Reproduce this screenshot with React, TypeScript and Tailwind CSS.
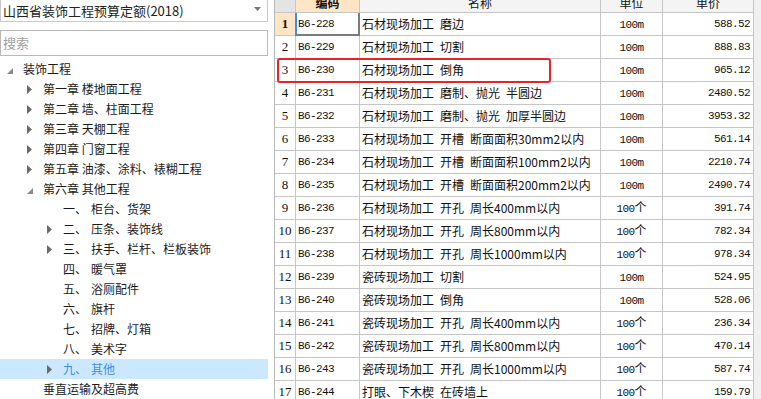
import React from "react";

type TreeNode = {
  level: number;
  arrow?: "open" | "closed";
  no?: string;
  label: string;
  selected?: boolean;
};

const tree: TreeNode[] = [
  { level: 0, arrow: "open", label: "装饰工程" },
  { level: 1, arrow: "closed", label: "第一章 楼地面工程" },
  { level: 1, arrow: "closed", label: "第二章 墙、柱面工程" },
  { level: 1, arrow: "closed", label: "第三章 天棚工程" },
  { level: 1, arrow: "closed", label: "第四章 门窗工程" },
  { level: 1, arrow: "closed", label: "第五章 油漆、涂料、裱糊工程" },
  { level: 1, arrow: "open", label: "第六章 其他工程" },
  { level: 2, no: "一、", label: "柜台、货架" },
  { level: 2, arrow: "closed", no: "二、", label: "压条、装饰线" },
  { level: 2, arrow: "closed", no: "三、", label: "扶手、栏杆、栏板装饰" },
  { level: 2, no: "四、", label: "暖气罩" },
  { level: 2, no: "五、", label: "浴厕配件" },
  { level: 2, no: "六、", label: "旗杆" },
  { level: 2, no: "七、", label: "招牌、灯箱" },
  { level: 2, no: "八、", label: "美术字" },
  { level: 2, arrow: "closed", no: "九、", label: "其他", selected: true },
  { level: 1, label: "垂直运输及超高费" },
];

const rows = [
  ["B6-228", "石材现场加工 磨边", "100m", "588.52"],
  ["B6-229", "石材现场加工 切割", "100m", "888.83"],
  ["B6-230", "石材现场加工 倒角", "100m", "965.12"],
  ["B6-231", "石材现场加工 磨制、抛光 半圆边", "100m", "2480.52"],
  ["B6-232", "石材现场加工 磨制、抛光 加厚半圆边", "100m", "3953.32"],
  ["B6-233", "石材现场加工 开槽 断面面积30mm2以内", "100m", "561.14"],
  ["B6-234", "石材现场加工 开槽 断面面积100mm2以内", "100m", "2210.74"],
  ["B6-235", "石材现场加工 开槽 断面面积200mm2以内", "100m", "2490.74"],
  ["B6-236", "石材现场加工 开孔 周长400mm以内", "100个", "391.74"],
  ["B6-237", "石材现场加工 开孔 周长800mm以内", "100个", "782.34"],
  ["B6-238", "石材现场加工 开孔 周长1000mm以内", "100个", "978.34"],
  ["B6-239", "瓷砖现场加工 切割", "100m", "524.95"],
  ["B6-240", "瓷砖现场加工 倒角", "100m", "528.06"],
  ["B6-241", "瓷砖现场加工 开孔 周长400mm以内", "100个", "236.34"],
  ["B6-242", "瓷砖现场加工 开孔 周长800mm以内", "100个", "470.14"],
  ["B6-243", "瓷砖现场加工 开孔 周长1000mm以内", "100个", "587.74"],
  ["B6-244", "打眼、下木楔 在砖墙上", "100个", "159.79"],
];

function Arrow({ kind }: { kind?: "open" | "closed" }) {
  if (kind === "open")
    return (
      <svg width="6" height="6" viewBox="0 0 6 6" className="mt-[3px]">
        <polygon points="6,0 6,6 0,6" fill="#8a8a8a" />
      </svg>
    );
  if (kind === "closed")
    return (
      <svg width="5" height="9" viewBox="0 0 5 9">
        <polygon points="0,0 5,4.5 0,9" fill="#6a6a6a" />
      </svg>
    );
  return null;
}

function Tree() {
  return (
    <div className="mt-[3px]">
      {tree.map((n, i) => (
        <div
          key={i}
          className={`flex h-[20px] items-center pl-[3px] ${n.selected ? "bg-[#cce8ff] text-[#3c8fe8]" : "text-[#1b1b1b]"}`}
        >
          <div style={{ width: n.level * 20 }} className="shrink-0" />
          <div className="flex w-[20px] shrink-0 items-center pl-[4px]">
            <Arrow kind={n.arrow} />
          </div>
          {n.no && <span className="mr-[4px]">{n.no}</span>}
          <span className="whitespace-nowrap">{n.label}</span>
        </div>
      ))}
    </div>
  );
}

function Unit({ value }: { value: string }) {
  const m = value.match(/^(\d+m?)(.*)$/);
  const head = m ? m[1] : value;
  const tail = m ? m[2] : "";
  return (
    <span>
      <span className="font-['Liberation_Mono',monospace] text-[11px] tracking-[-0.6px]">{head}</span>
      {tail && <span className="text-[12px]">{tail}</span>}
    </span>
  );
}

const cell = "border-r border-b border-[#c6c6c6] h-[23px] flex items-center whitespace-nowrap";

export default function App() {
  return (
    <div className="flex h-[399px] w-[761px] overflow-hidden bg-white font-['Noto_Sans_CJK_SC',sans-serif] text-[12px]">
      {/* left pane */}
      <div className="w-[268px] shrink-0">
        <div className="flex h-[22px] items-center justify-between border border-t-0 border-[#c9c9c9] pl-[2px] pr-[6px] text-[13px] text-[#222]">
          <span>山西省装饰工程预算定额(2018)</span>
          <svg width="7" height="4" viewBox="0 0 7 4" className="-mt-[3px]">
            <polygon points="0,0 7,0 3.5,4" fill="#777" />
          </svg>
        </div>
        <div className="mt-[8px] flex h-[26px] items-center border border-[#b9b9b9] pl-[2px] text-[13px] text-[#a0a0a0]">
          搜索
        </div>
        <Tree />
      </div>

      {/* right pane */}
      <div className="ml-[6px] flex flex-1">
        <div className="border-l border-[#b8b8b8]">
          <div className="grid grid-cols-[21px_64px_241px_62px_91px] text-[#111]">
            {/* header (scrolled, partly hidden) */}
            <div className="h-[13px] border-r border-b border-[#c6c6c6] bg-[#e4e4e4]" />
            <div className="flex h-[13px] items-end justify-center overflow-hidden border-r border-b border-[#c6c6c6] bg-[#fde5c6] font-bold">
              <div className="h-[18px] leading-[18px]">编码</div>
            </div>
            <div className="flex h-[13px] items-end justify-center overflow-hidden border-r border-b border-[#c6c6c6] bg-[#f4f4f4]">
              <div className="h-[18px] leading-[18px]">名称</div>
            </div>
            <div className="flex h-[13px] items-end justify-center overflow-hidden border-r border-b border-[#c6c6c6] bg-[#f4f4f4]">
              <div className="h-[18px] leading-[18px]">单位</div>
            </div>
            <div className="flex h-[13px] items-end justify-center overflow-hidden border-r border-b border-[#c6c6c6] bg-[#f4f4f4]">
              <div className="h-[18px] leading-[18px]">单价</div>
            </div>

            {rows.map((r, i) => (
              <React.Fragment key={i}>
                <div
                  className={`${cell} relative justify-center font-['Liberation_Serif',serif] text-[13px] ${i === 0 ? "bg-[#fde5c6] font-bold" : "bg-white"}`}
                >
                  {i + 1}
                  {i === 2 && (
                    <div className="pointer-events-none absolute left-[2px] top-[-1px] z-10 h-[25px] w-[274px] rounded-[3px] border-2 border-[#e8232b]" />
                  )}
                </div>
                <div className={`${cell} relative pl-[2px] font-['Liberation_Mono',monospace] text-[11px] tracking-[-0.6px]`}>
                  {r[0]}
                  {i === 0 && (
                    <div className="absolute -left-px top-0 -right-px -bottom-px border-b-2 border-l-2 border-r-2 border-b-[#7b7b7b] border-l-[#3d8ee8] border-r-[#7b7b7b]" />
                  )}
                </div>
                <div className={`${cell} overflow-hidden whitespace-pre pl-[2px]`}>{r[1].replace(/ /g, "\u2002")}</div>
                <div className={`${cell} justify-center`}>
                  <Unit value={r[2]} />
                </div>
                <div className={`${cell} justify-end pr-[3px] font-['Liberation_Mono',monospace] text-[11px] tracking-[-0.6px]`}>
                  {r[3]}
                </div>
              </React.Fragment>
            ))}
          </div>
        </div>
        {/* scrollbar */}
        <div className="flex-1 bg-[#f0f0f0]" />
      </div>
    </div>
  );
}
